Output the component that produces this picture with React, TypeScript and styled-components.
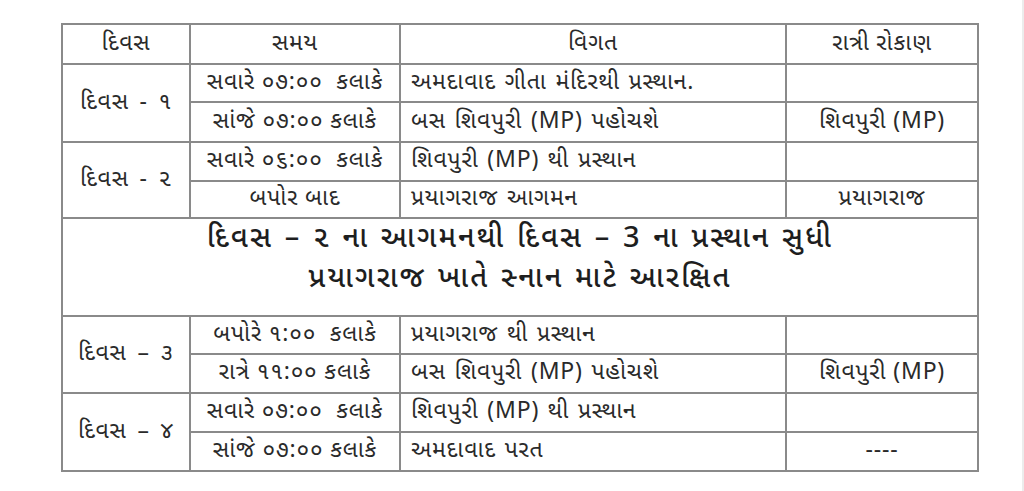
import React from "react";
import styled, { createGlobalStyle } from "styled-components";

const Global = createGlobalStyle`
  html, body { margin: 0; padding: 0; background: #ffffff; }
  body { width: 1024px; height: 491px; overflow: hidden; }
`;

const Page = styled.div`
  width: 1024px;
  height: 491px;
  box-sizing: border-box;
  padding: 23px 0 0 61px;
  background: #fff;
  border-right: 2px solid #ececec;
`;

const Table = styled.table`
  border-collapse: collapse;
  table-layout: fixed;
  width: 916px;
  border: 2px solid #8c8c8c;
  font-family: "Noto Sans Gujarati", "Lohit Gujarati", "Shruti", "Noto Sans", sans-serif;
  color: #2a2a2a;
  font-size: 23px;
  letter-spacing: 0.8px;
`;

const Cell = styled.td<{ $align?: "left" | "center"; $gap?: number }>`
  border: 2px solid #8a8a8a;
  padding: 0 0 0 ${(p) => (p.$align === "left" ? "10px" : "0")};
  text-align: ${(p) => p.$align ?? "center"};
  vertical-align: middle;
  white-space: pre;
  line-height: 1;
  word-spacing: ${(p) => p.$gap ?? 0}px;
`;

const HeadCell = styled.th`
  border: 2px solid #8a8a8a;
  font-weight: 400;
  text-align: center;
  vertical-align: middle;
  line-height: 1;
`;

const Row = styled.tr<{ $h: number }>`
  height: ${(p) => p.$h}px;
`;

const Notice = styled.td`
  border: 2px solid #8a8a8a;
  text-align: center;
  vertical-align: middle;
  font-size: 29px;
  font-weight: 500;
  letter-spacing: 2.1px;
  word-spacing: 2px;
  color: #1e1e1e;
  padding: 0 0 14px;
`;

const NoticeLine = styled.div`
  line-height: 40px;
  white-space: nowrap;
`;

type Entry = { time: string; detail: string; stay: string };
type Day = { label: string; entries: Entry[] };

const before: Day[] = [
  {
    label: "દિવસ - ૧",
    entries: [
      { time: "સવારે ૦૭:૦૦  કલાકે", detail: "અમદાવાદ ગીતા મંદિરથી પ્રસ્થાન.", stay: "" },
      { time: "સાંજે ૦૭:૦૦ કલાકે", detail: "બસ શિવપુરી (MP) પહોચશે", stay: "શિવપુરી (MP)" },
    ],
  },
  {
    label: "દિવસ - ૨",
    entries: [
      { time: "સવારે ૦૬:૦૦  કલાકે", detail: "શિવપુરી (MP) થી પ્રસ્થાન", stay: "" },
      { time: "બપોર બાદ", detail: "પ્રયાગરાજ આગમન", stay: "પ્રયાગરાજ" },
    ],
  },
];

const after: Day[] = [
  {
    label: "દિવસ – ૩",
    entries: [
      { time: "બપોરે ૧:૦૦  કલાકે", detail: "પ્રયાગરાજ થી પ્રસ્થાન", stay: "" },
      { time: "રાત્રે ૧૧:૦૦ કલાકે", detail: "બસ શિવપુરી (MP) પહોચશે", stay: "શિવપુરી (MP)" },
    ],
  },
  {
    label: "દિવસ – ૪",
    entries: [
      { time: "સવારે ૦૭:૦૦  કલાકે", detail: "શિવપુરી (MP) થી પ્રસ્થાન", stay: "" },
      { time: "સાંજે ૦૭:૦૦ કલાકે", detail: "અમદાવાદ પરત", stay: "----" },
    ],
  },
];

const heightsBefore = [[38, 40], [39, 37]];
const heightsAfter = [[38, 39], [39, 39]];

function DayRows({ day, heights }: { day: Day; heights: number[] }) {
  return (
    <>
      {day.entries.map((e, i) => (
        <Row key={i} $h={heights[i]}>
          {i === 0 && (
            <Cell rowSpan={day.entries.length} $gap={4}>
              {day.label}
            </Cell>
          )}
          <Cell>{e.time}</Cell>
          <Cell $align="left" $gap={2}>
            {e.detail}
          </Cell>
          <Cell>{e.stay}</Cell>
        </Row>
      ))}
    </>
  );
}

export default function App() {
  return (
    <Page>
      <Global />
      <Table>
        <colgroup>
          <col style={{ width: 128 }} />
          <col style={{ width: 210 }} />
          <col style={{ width: 386 }} />
          <col style={{ width: 192 }} />
        </colgroup>
        <tbody>
          <Row $h={40}>
            <HeadCell>દિવસ</HeadCell>
            <HeadCell>સમય</HeadCell>
            <HeadCell>વિગત</HeadCell>
            <HeadCell>રાત્રી રોકાણ</HeadCell>
          </Row>
          {before.map((d, i) => (
            <DayRows key={d.label} day={d} heights={heightsBefore[i]} />
          ))}
          <Row $h={98}>
            <Notice colSpan={4}>
              <NoticeLine>દિવસ – ૨ ના આગમનથી દિવસ – 3 ના પ્રસ્થાન સુધી</NoticeLine>
              <NoticeLine>પ્રયાગરાજ ખાતે સ્નાન માટે આરક્ષિત</NoticeLine>
            </Notice>
          </Row>
          {after.map((d, i) => (
            <DayRows key={d.label} day={d} heights={heightsAfter[i]} />
          ))}
        </tbody>
      </Table>
    </Page>
  );
}
